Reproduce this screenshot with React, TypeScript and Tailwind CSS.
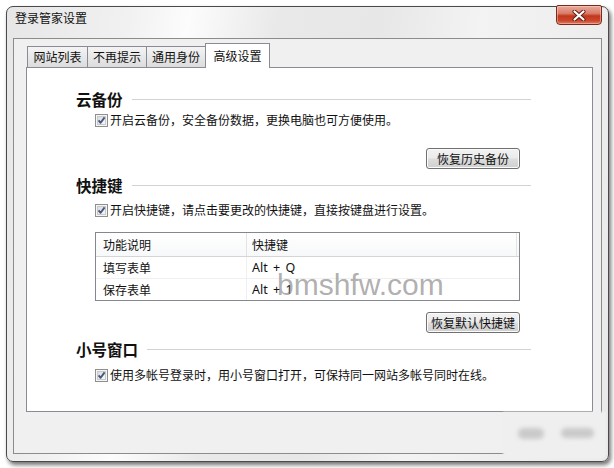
import React from "react";

function CheckBox() {
  return (
    <svg width="13" height="13" viewBox="0 0 13 13" className="shrink-0">
      <defs>
        <linearGradient id="cbFill" x1="0" y1="0" x2="1" y2="1">
          <stop offset="0" stopColor="#d9d9d9" />
          <stop offset="1" stopColor="#fafafa" />
        </linearGradient>
      </defs>
      <rect x="0.5" y="0.5" width="12" height="12" fill="#f5f5f5" stroke="#8e8f8f" />
      <rect x="2.5" y="2.5" width="8" height="8" fill="url(#cbFill)" stroke="#c9c9c9" />
      <path d="M3.6 6.4 L5.6 8.8 L9.6 3.4" fill="none" stroke="#43587f" strokeWidth="1.9" strokeLinejoin="round" />
    </svg>
  );
}

function CheckRow({ text, className }: { text: string; className: string }) {
  return (
    <div className={`flex items-center h-[20px] ml-[19px] gap-[2px] ${className}`}>
      <CheckBox />
      <span className="text-[12px] leading-[20px] text-[#111]">{text}</span>
    </div>
  );
}

function SectionTitle({ text, className }: { text: string; className: string }) {
  return (
    <div className={`flex items-center h-[20px] ${className}`}>
      <span className="text-[15.5px] leading-[20px] font-bold text-[#111]">{text}</span>
      <div className="flex-1 h-px bg-[#d3d3d3] ml-[9px]" />
    </div>
  );
}

function PushButton({ text, className }: { text: string; className: string }) {
  return (
    <div className={`flex justify-end mr-[11px] ${className}`}>
      <div className="w-[94px] h-[21px] rounded-[3px] border border-[#707070] bg-[linear-gradient(to_bottom,#f2f2f2_0%,#ebebeb_48%,#dddddd_52%,#cfcfcf_100%)] shadow-[inset_0_0_0_1px_#fbfbfb] flex items-center justify-center text-[12px] leading-[16px] text-[#111]">
        {text}
      </div>
    </div>
  );
}

function Tab({ text, active, first }: { text: string; active?: boolean; first?: boolean }) {
  if (active) {
    return (
      <div className="relative z-10 -ml-[1px] mb-[-1px] w-[65px] h-[25px] border border-b-0 border-[#898c95] bg-white flex items-center justify-center text-[12px] leading-[16px] text-[#111] pb-[1px]">
        {text}
      </div>
    );
  }
  return (
    <div
      className={`${first ? "w-[61px]" : "-ml-[1px] w-[60px]"} h-[21px] border border-b-0 border-[#898c95] bg-[linear-gradient(to_bottom,#f4f4f4,#e8e8e8_50%,#dcdcdc)] flex items-center justify-center text-[12px] leading-[16px] text-[#111]`}
    >
      {text}
    </div>
  );
}

function ShortcutTable() {
  const rows = [
    { name: "填写表单", key: "Alt + Q" },
    { name: "保存表单", key: "Alt + 1" },
  ];
  return (
    <div className="relative ml-[19px] mt-[12px] w-[425px] h-[69px] border border-[#828790] bg-white text-[12px] text-[#111]">
      <div className="flex h-[24px] border-b border-[#d5d5d5] bg-[linear-gradient(to_bottom,#ffffff,#f7f8f9)]">
        <div className="w-[151px] pl-[7px] border-r border-[#e3e3e3] flex items-center leading-[16px]">功能说明</div>
        <div className="w-[270px] pl-[5px] border-r border-[#e3e3e3] flex items-center leading-[16px]">快捷键</div>
      </div>
      {rows.map((r, i) => (
        <div
          key={r.name}
          className={`flex ${i === 0 ? "h-[22px] border-b border-[#f0f0f0]" : "h-[21px]"}`}
        >
          <div className="w-[151px] pl-[7px] border-r border-[#efefef] flex items-center leading-[16px]">{r.name}</div>
          <div className="pl-[5px] flex items-center leading-[16px] font-['Noto_Sans',sans-serif] text-[12.5px] [word-spacing:2px]">{r.key}</div>
        </div>
      ))}
      {/* site watermark laid over the list */}
      <div className="absolute left-[181px] top-[37px] font-['Liberation_Sans',sans-serif] text-[30px] leading-[30px] text-[rgba(125,125,125,0.62)] pointer-events-none">
        bmshfw.com
      </div>
    </div>
  );
}

export default function App() {
  return (
    <div className="relative w-[614px] h-[468px] bg-white overflow-hidden font-['Noto_Sans_CJK_SC',sans-serif]">
      <div className="ml-[6px] mt-[6px] w-[603px] h-[456px] rounded-[7px] border border-[#4a4a4a] shadow-[2px_3px_4px_rgba(0,0,0,0.55)] bg-[linear-gradient(100deg,#e6e6e6_0%,#f1f1f1_18%,#fcfcfc_27%,#e9e9e9_40%,#e7e7e7_55%,#f3f3f3_70%,#e9e9e9_100%)] flex flex-col">
        {/* title bar */}
        <div className="h-[31px] flex items-start pl-[8px] pr-[6px]">
          <div className="mt-[3px] text-[12px] leading-[16px] text-[#111]">登录管家设置</div>
          <div className="ml-auto -mt-[2px] w-[46px] h-[20px] rounded-b-[4px] rounded-t-[2px] border border-[#7a2a1d] bg-[linear-gradient(to_bottom,#e8ab9d_0%,#d97a66_42%,#c2361c_55%,#cb462b_80%,#dc7b62_100%)] shadow-[inset_0_0_0_1px_rgba(255,220,210,0.45)] flex items-center justify-center">
            <svg width="14" height="11" viewBox="0 0 14 11">
              <path d="M2.5 1.5 L11.5 9.5 M11.5 1.5 L2.5 9.5" stroke="#5a1c12" strokeWidth="4" strokeLinecap="round" />
              <path d="M2.5 1.5 L11.5 9.5 M11.5 1.5 L2.5 9.5" stroke="#ffffff" strokeWidth="2.2" strokeLinecap="round" />
            </svg>
          </div>
        </div>

        {/* client area */}
        <div className="mx-[6px] mb-[7px] flex-1 border border-[#8c8c8c] bg-[#f0f0f0] pt-[4px] pl-[12px]">
          <div className="flex items-end h-[24px] ml-[1px]">
            <Tab text="网站列表" first />
            <Tab text="不再提示" />
            <Tab text="通用身份" />
            <Tab text="高级设置" active />
          </div>

          <div className="w-[567px] h-[345px] border border-[#898c95] bg-white pl-[49px] pt-[21px]">
            <div className="w-[455px]">
              <SectionTitle text="云备份" className="" />
              <CheckRow text="开启云备份，安全备份数据，更换电脑也可方便使用。" className="mt-[1px]" />
              <PushButton text="恢复历史备份" className="mt-[18px]" />

              <SectionTitle text="快捷键" className="mt-[6px]" />
              <CheckRow text="开启快捷键，请点击要更改的快捷键，直接按键盘进行设置。" className="mt-[5px]" />
              <ShortcutTable />
              <PushButton text="恢复默认快捷键" className="mt-[11px]" />

              <SectionTitle text="小号窗口" className="mt-[6px]" />
              <CheckRow text="使用多帐号登录时，用小号窗口打开，可保持同一网站多帐号同时在线。" className="mt-[6px]" />
            </div>
          </div>
        </div>
      </div>

      {/* smudged corner at the lower right */}
      <div className="absolute left-[503px] top-[412px] w-[103px] h-[47px] bg-[#efefef] rounded-br-[6px] blur-[1px]" />
      <div className="absolute left-[518px] top-[428px] w-[26px] h-[11px] rounded-full bg-[#cacaca] blur-[2px]" />
      <div className="absolute left-[561px] top-[428px] w-[33px] h-[10px] rounded-full bg-[#cacaca] blur-[2px]" />
    </div>
  );
}
